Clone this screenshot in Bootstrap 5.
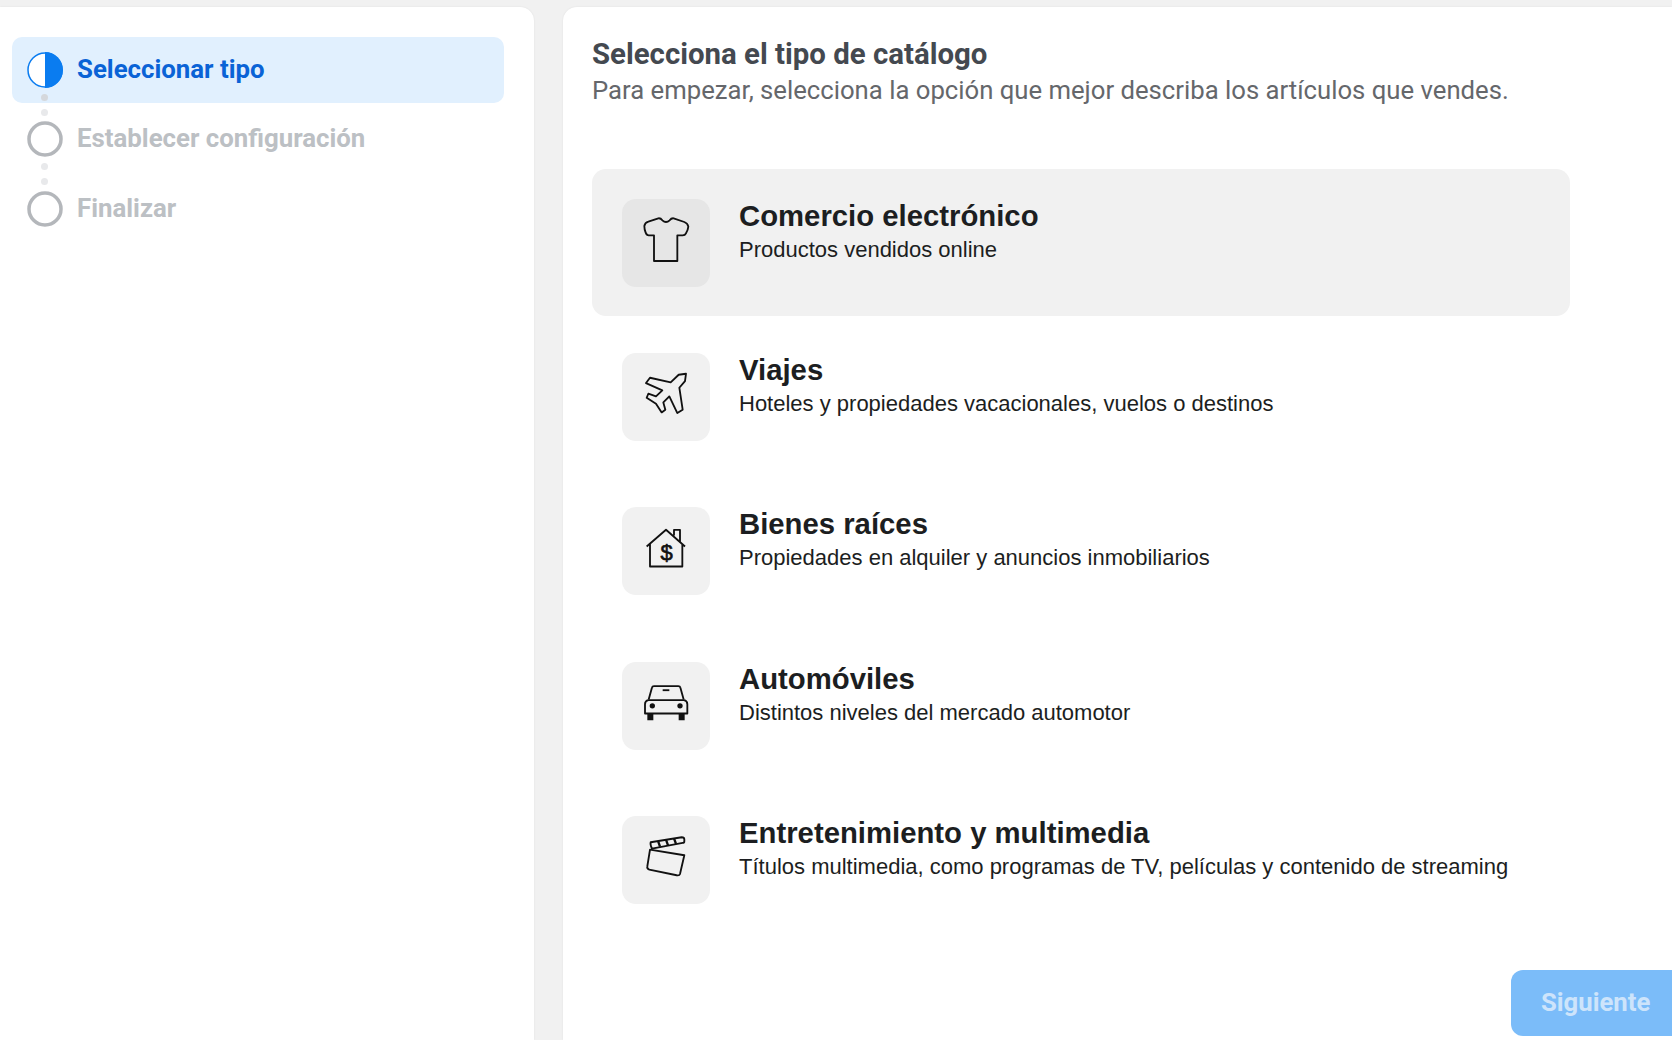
<!DOCTYPE html>
<html lang="es">
<head>
<meta charset="utf-8">
<title>Catálogo</title>
<link rel="stylesheet" href="https://cdn.jsdelivr.net/npm/bootstrap@5.3.0/dist/css/bootstrap.min.css">
<style>
html,body{height:100%;overflow:hidden;}
body{background:#f1f1f1;font-family:"Liberation Sans",Arial,sans-serif;}
.shell{height:1040px;padding-top:7px;gap:29px;}
.side-pane{width:534px;flex:none;background:#fff;border-top-right-radius:14px;padding:30px 30px 0 12px;box-shadow:0 0 2px rgba(0,0,0,.08);}
.main-pane{flex:1;min-width:0;background:#fff;border-top-left-radius:14px;padding:32px 0 4px 29px;box-shadow:0 0 2px rgba(0,0,0,.08);}
.step-row{height:66px;padding-left:15px;gap:14px;border-radius:10px;font-family:Roboto,sans-serif;font-weight:700;color:#bcc0c4;margin-bottom:3.6px;}
.step-row.is-on{background:#e1f0fe;color:#0a63d6;}
.step-row svg{margin-top:-1px;}
.step-txt{font-size:25.8px;line-height:30px;padding-bottom:3px;}
.step-dots{position:absolute;left:41px;width:8px;}
.step-dots i{display:block;width:7px;height:7px;border-radius:50%;background:#e8e9eb;margin-bottom:8px;}
.dots-one{top:87px;}
.dots-two{top:156px;}
.step-dots i.dot-dark{background:#d5d8dc;}
.head-title{font-family:Roboto,sans-serif;font-weight:700;font-size:29.4px;line-height:30px;color:#444950;margin:0;}
.head-sub{font-family:Roboto,sans-serif;font-size:25.7px;line-height:30px;color:#65676b;margin:6px 0 0;}
.type-list{margin-top:64px;width:978px;gap:7.4px;}
.type-item{height:147px;padding:29.5px 30px;gap:29px;border-radius:14px;}
.type-item.is-on{background:#f1f1f1;}
.type-ico{width:88px;height:88px;flex:none;background:#f1f1f1;border-radius:14px;}
.type-item.is-on .type-ico{background:#e6e6e6;}
.type-ico svg{fill:none;stroke:#111;stroke-width:5.500;stroke-linejoin:round;}
.type-name{font-weight:700;font-size:29.3px;line-height:34px;color:#1c1e21;}
.type-desc{font-size:22px;line-height:26px;color:#1c1e21;margin-top:4px;}
.next-btn{margin-top:auto;align-self:flex-end;width:161px;height:66px;border:0;border-radius:12px 0 0 12px;background:#7bbcf9;color:#cde4fb;font-family:Roboto,sans-serif;font-weight:700;font-size:25.7px;text-align:left;padding:0 0 2px 30px;}
</style>
</head>
<body>
<div class="d-flex shell">
  <aside class="side-pane position-relative">
    <div class="d-flex align-items-center step-row is-on">
      <svg width="36" height="36" viewBox="0 0 36 36"><circle cx="18" cy="18" r="17" fill="#fff" stroke="#0a7cf0" stroke-width="1.5"/><path d="M18 0a18 18 0 0 1 0 36z" fill="#0a7cf0"/></svg>
      <span class="step-txt">Seleccionar tipo</span>
    </div>
    <div class="d-flex align-items-center step-row">
      <svg width="36" height="36" viewBox="0 0 36 36"><circle cx="18" cy="18" r="16" fill="none" stroke="#b4b7bb" stroke-width="3.5"/></svg>
      <span class="step-txt">Establecer configuración</span>
    </div>
    <div class="d-flex align-items-center step-row">
      <svg width="36" height="36" viewBox="0 0 36 36"><circle cx="18" cy="18" r="16" fill="none" stroke="#b4b7bb" stroke-width="3.5"/></svg>
      <span class="step-txt">Finalizar</span>
    </div>
    <div class="step-dots dots-one"><i class="dot-dark"></i><i></i></div>
    <div class="step-dots dots-two"><i></i><i></i></div>
  </aside>
  <main class="main-pane d-flex flex-column">
    <h1 class="head-title">Selecciona el tipo de catálogo</h1>
    <p class="head-sub">Para empezar, selecciona la opción que mejor describa los artículos que vendes.</p>
    <div class="d-flex flex-column type-list">
      <div class="d-flex type-item is-on">
        <div class="d-flex align-items-center justify-content-center type-ico">
          <svg width="70" height="70" viewBox="3 6 210 210"><path d="M43 60Q45 50 55 47L85 37Q92 36 97 43Q108 53 119 43Q124 36 131 37L163 48Q173 52 175 62Q174 72 168 82Q165 88 158 88H142V165H72V88H56Q50 88 47 80Q43 70 43 60Z"/></svg>
        </div>
        <div><div class="type-name">Comercio electrónico</div><div class="type-desc">Productos vendidos online</div></div>
      </div>
      <div class="d-flex type-item">
        <div class="d-flex align-items-center justify-content-center type-ico">
          <svg width="70" height="70" viewBox="3 4.800 210 210"><path d="M168 40L165 62L148 82L158 148L142 158L118 108L100 126L106 148L95 156L78 130L50 112L55 100L78 108L97 90L48 68L60 52L122 66L146 43Z"/></svg>
        </div>
        <div><div class="type-name">Viajes</div><div class="type-desc">Hoteles y propiedades vacacionales, vuelos o destinos</div></div>
      </div>
      <div class="d-flex type-item">
        <div class="d-flex align-items-center justify-content-center type-ico">
          <svg width="70" height="70" viewBox="3 3.600 210 210"><path d="M50 95L108 45L165 95M60 86V155H157V86M132 62V45H150V80"/><text x="110" y="136" text-anchor="middle" font-family="Liberation Sans, sans-serif" font-size="66" fill="#111" stroke="#111" stroke-width="2">$</text></svg>
        </div>
        <div><div class="type-name">Bienes raíces</div><div class="type-desc">Propiedades en alquiler y anuncios inmobiliarios</div></div>
      </div>
      <div class="d-flex type-item">
        <div class="d-flex align-items-center justify-content-center type-ico">
          <svg width="70" height="70" viewBox="3 2.400 210 210"><path d="M56 88L66 52Q67 48 72 48H145Q150 48 151 52L161 88"/><path d="M55 90H162Q172 92 172 102V130H45V102Q45 92 55 90Z"/><path d="M98 60H118"/><circle cx="67" cy="107" r="8" fill="#111" stroke="none"/><circle cx="150" cy="107" r="8" fill="#111" stroke="none"/><path d="M52 130H70V150H52ZM146 130H164V150H146Z" fill="#111" stroke="none"/></svg>
        </div>
        <div><div class="type-name">Automóviles</div><div class="type-desc">Distintos niveles del mercado automotor</div></div>
      </div>
      <div class="d-flex type-item">
        <div class="d-flex align-items-center justify-content-center type-ico">
          <svg width="70" height="70" viewBox="3 1.200 210 210"><path d="M60 75L163 92L150 148Q148 154 140 152L58 135Q50 132 52 125Z"/><path d="M62 53L155 38Q163 38 163 45V50Q163 55 158 55L66 72Q60 60 62 53Z"/><path d="M84 49L90 66M108 45L114 62M132 41L138 58" stroke-width="7"/></svg>
        </div>
        <div><div class="type-name">Entretenimiento y multimedia</div><div class="type-desc">Títulos multimedia, como programas de TV, películas y contenido de streaming</div></div>
      </div>
    </div>
    <button type="button" class="next-btn" disabled>Siguiente</button>
  </main>
</div>
</body>
</html>
